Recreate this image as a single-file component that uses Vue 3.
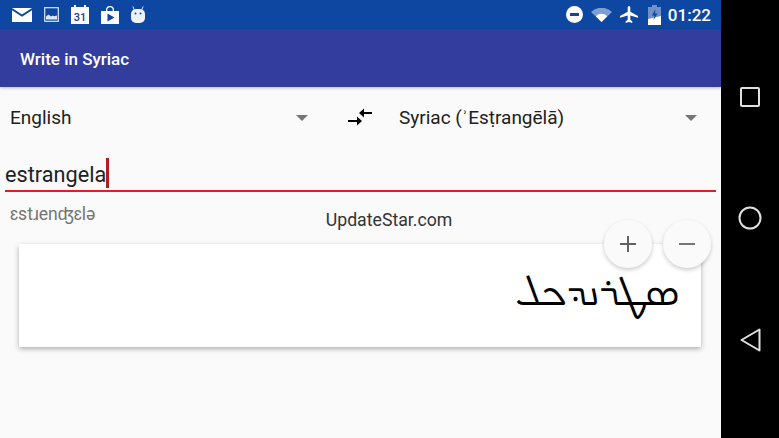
<template>
  <div class="device">
    <div class="screen">
      <div class="status">
        <div class="status-icons">
          <svg width="20" height="14" viewBox="0 0 20 14"><path d="M0 0h20L10 6.5z" fill="#fff"/><path d="M0 2.2l10 6.5 10-6.5V14H0z" fill="#fff"/></svg>
          <svg width="15" height="15" viewBox="0 0 15 15"><rect x=".7" y=".7" width="13.6" height="13.6" fill="none" stroke="#dbe6f5" stroke-width="1.2"/><path d="M2 12.500V9.500l2.500-2 2.500 2 1.500-1 1.500.8 3-.8v4z" fill="#dbe6f5"/></svg>
          <svg width="18" height="19" viewBox="0 0 18 19"><path d="M0 2h3V0h2v2h8V0h2v2h3v17H0z" fill="#fff"/><text x="9" y="16" text-anchor="middle" class="cal-num">31</text></svg>
          <svg width="18" height="18" viewBox="0 0 18 18"><path d="M5 5V4a4 4 0 0 1 8 0v1h5v13H0V5zM6.300 5h5.400V4a2.700 2.700 0 0 0-5.400 0z" fill="#fff" fill-rule="evenodd"/><path d="M6.500 7.500v8l7-4z" fill="#0d47a1"/></svg>
          <svg width="14" height="17" viewBox="0 0 14 17"><path d="M3 3.500L2 .5M11 3.500l1-3" stroke="#dbe6f5" stroke-width="1"/><rect y="3" width="14" height="14" rx="5" fill="#eef3fa"/><circle cx="4.500" cy="7.500" r="1" fill="#0d47a1"/><circle cx="9.500" cy="7.500" r="1" fill="#0d47a1"/></svg>
        </div>
        <div class="status-right">
          <svg width="17" height="17" viewBox="0 0 17 17"><circle cx="8.500" cy="8.500" r="8.500" fill="#fff"/><rect x="4" y="7" width="9" height="3" fill="#0d47a1"/></svg>
          <svg width="21" height="14" viewBox="0 0 21 14"><path d="M0 4a15 15 0 0 1 21 0L10.500 14z" fill="#7e9fd2"/><path d="M4.800 8.200a8 8 0 0 1 11.400 0L10.500 14z" fill="#fff"/></svg>
          <svg class="plane" width="18" height="17" viewBox="0 0 18 17"><path d="M9 0c.9 0 1.300 1 1.300 2v3.800L18 10v1.800l-7.700-2.300v4.300l2 1.500V17L9 16l-3.300 1v-1.700l2-1.500V9.500L0 11.800V10l7.700-4.200V2C7.700 1 8.100 0 9 0z" fill="#fff"/></svg>
          <svg width="13" height="20" viewBox="0 0 13 20"><path d="M4 0h5v2h4v18H0V2h4z" fill="#6f90c8"/><path d="M0 14l13-3v9H0z" fill="#fff"/><path d="M7.500 4L4 10.500h2.500L5.500 15 9.500 8.500H7z" fill="#0d47a1"/></svg>
          <span class="time">01:22</span>
        </div>
      </div>

      <div class="toolbar">Write in Syriac</div>

      <div class="content">
        <div class="langs">
          <div class="spinner left">
            <span>English</span>
            <i class="arrow"></i>
          </div>
          <svg class="swap" width="24" height="20" viewBox="0 0 24 20"><path d="M0 13h10M24 5H14" stroke="#000" stroke-width="2"/><path d="M14 13L9 8.500v9zM11 5l5-4.500v9z" fill="#000"/></svg>
          <div class="spinner right">
            <span>Syriac (ʾEsṭrangēlā)</span>
            <i class="arrow"></i>
          </div>
        </div>

        <div class="input"><span>estrangela</span><i class="caret"></i></div>
        <div class="ipa">ɛstɹenʤɛlə</div>
        <div class="watermark">UpdateStar.com</div>

        <div class="card">
          <div class="zoom">
            <button class="round">
              <svg width="18" height="18" viewBox="0 0 18 18"><path d="M9 1v16M1 9h16" stroke="#616161" stroke-width="2"/></svg>
            </button>
            <button class="round">
              <svg width="18" height="18" viewBox="0 0 18 18"><path d="M1 9h16" stroke="#757575" stroke-width="2"/></svg>
            </button>
          </div>
          <div class="syriac" dir="rtl">ܣܛܪܢܕܟܠ</div>
        </div>
      </div>
    </div>

    <div class="nav">
      <svg width="20" height="20" viewBox="0 0 20 20"><rect x="1" y="1" width="18" height="18" rx="1" fill="none" stroke="#e0e0e0" stroke-width="2"/></svg>
      <svg width="24" height="24" viewBox="0 0 24 24"><circle cx="12" cy="12" r="10.500" fill="none" stroke="#e0e0e0" stroke-width="2"/></svg>
      <svg width="21" height="24" viewBox="0 0 21 24"><path d="M19.500 1.500v21L1.500 12z" fill="none" stroke="#e0e0e0" stroke-width="2" stroke-linejoin="round"/></svg>
    </div>
  </div>
</template>

<script setup>
</script>

<style>
html, body {
  margin: 0;
  background: #000;
  overflow: hidden;
}
</style>

<style scoped>
.device {
  display: flex;
  width: 779px;
  height: 438px;
  font-family: Roboto, "Liberation Sans", sans-serif;
}

.screen {
  width: 721px;
  display: flex;
  flex-direction: column;
  background: #fafafa;
}

.status {
  height: 29px;
  background: #0d47a1;
  display: flex;
  justify-content: space-between;
  align-items: center;
  padding: 0 10px 0 12px;
}

.status-icons, .status-right {
  display: flex;
  align-items: center;
}

.status-icons { gap: 12px; }
.status-right { gap: 8px; }

.cal-num {
  font-size: 11px;
  font-weight: 500;
  fill: #1a3a8c;
}

.plane { margin-right: 2px; }

.time {
  color: #fff;
  font-size: 17px;
  font-weight: 500;
  margin-left: -1px;
}

.toolbar {
  height: 58px;
  line-height: 60px;
  padding-left: 20px;
  background: #333d9d;
  color: #fff;
  font-size: 17px;
  font-weight: 500;
  box-shadow: 0 1px 3px rgba(0,0,0,.25);
}

.content {
  position: relative;
  flex: 1;
}

.langs {
  display: flex;
  align-items: center;
  height: 61px;
}

.spinner {
  display: flex;
  justify-content: space-between;
  align-items: center;
  font-size: 19px;
  color: #212121;
}

.spinner.left {
  width: 298px;
  margin-left: 10px;
}

.spinner.right {
  width: 298px;
  margin-left: 27px;
}

.swap {
  margin-left: 40px;
}

.arrow {
  width: 0;
  height: 0;
  border-left: 6px solid transparent;
  border-right: 6px solid transparent;
  border-top: 6px solid #757575;
}

.input {
  margin: 10px 5px 0;
  height: 32px;
  border-bottom: 2px solid #e02020;
  display: flex;
  align-items: center;
  font-size: 21.7px;
  color: #212121;
}

.caret {
  width: 2.500px;
  height: 30px;
  margin-bottom: 2px;
  background: #b71c1c;
}

.ipa {
  margin: 12px 0 0 10px;
  font-size: 17.6px;
  color: #757575;
}

.watermark {
  position: absolute;
  left: 0;
  right: -57px;
  top: 123px;
  text-align: center;
  font-size: 17.7px;
  color: #333;
}

.card {
  position: relative;
  margin: 19px 20px 0 19px;
  height: 103px;
  background: #fff;
  box-shadow: 0 2px 5px rgba(0,0,0,.3);
  display: flex;
  justify-content: flex-end;
  align-items: center;
}

.zoom {
  position: absolute;
  top: -24px;
  right: -10px;
  display: flex;
  gap: 11px;
}

.round {
  width: 48px;
  height: 48px;
  border: 0;
  padding: 0;
  border-radius: 50%;
  background: #fafafa;
  box-shadow: 0 2px 4px rgba(0,0,0,.2);
  display: flex;
  align-items: center;
  justify-content: center;
}

.syriac {
  font-family: "Noto Sans Syriac", serif;
  font-size: 39.5px;
  margin-right: 21px;
  color: #000;
}

.nav {
  width: 58px;
  height: 265px;
  padding-top: 87px;
  background: #000;
  display: flex;
  flex-direction: column;
  align-items: center;
  justify-content: space-between;
}
</style>
